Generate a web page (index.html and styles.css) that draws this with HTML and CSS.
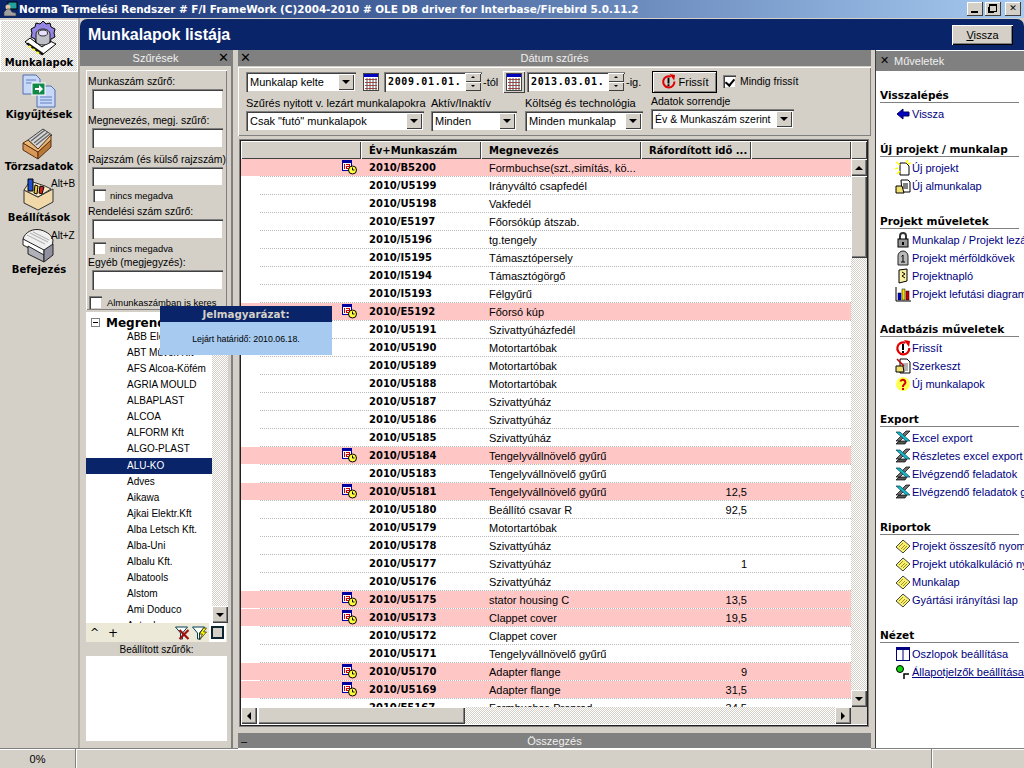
FILE: index.html
```html
<!DOCTYPE html>
<html lang="hu">
<head>
<meta charset="utf-8">
<title>Munkalapok listája</title>
<link rel="stylesheet" href="styles.css">
</head>
<body>
<svg class="defs" width="0" height="0">
  <symbol id="i-late" viewBox="0 0 16 16">
    <rect x="1" y="1" width="10" height="11" fill="#0000a0"/>
    <rect x="2" y="4" width="8" height="7" fill="#fff"/>
    <path d="M3 5h1v5H3zM5 5h4v3H6v1h3v1H5V7h3V6H5z" fill="#d00000"/>
    <circle cx="11.500" cy="11" r="4" fill="#ffff40" stroke="#000"/>
    <path d="M11.500 8.500V11h2" fill="none" stroke="#000"/>
  </symbol>
  <symbol id="i-cal" viewBox="0 0 16 18">
    <rect x="0.500" y="0.500" width="15" height="17" fill="#fff" stroke="#444"/>
    <rect x="1" y="1" width="14" height="3" fill="#0000c0"/>
    <path d="M2 6h12v1H2zM2 9h12v1H2zM2 12h12v1H2zM2 15h12v1H2z" fill="#c04040"/>
    <path d="M4 5v12M7 5v12M10 5v12M13 5v12" stroke="#555" fill="none"/>
  </symbol>
  <symbol id="i-refresh" viewBox="0 0 16 16">
    <path d="M10.500 2.800A6 6 0 1 0 14.300 8" fill="none" stroke="#e00000" stroke-width="2.200"/>
    <path d="M9 0l6 1-1 6z" fill="#e00000"/>
    <path d="M7 4h2v6H7zM7 11h2v2H7z" fill="#000"/>
  </symbol>
  <symbol id="i-xl" viewBox="0 0 16 16">
    <path d="M1 14h9l2-3H4z" fill="#555" stroke="#000" stroke-width=".7"/>
    <path d="M11 1h4L5 11H1z" fill="#707070" stroke="#000" stroke-width=".7"/>
    <path d="M1 2h4l10 9h-4z" fill="#18b8c8" stroke="#004050" stroke-width=".7"/>
  </symbol>
  <symbol id="i-rep" viewBox="0 0 16 16">
    <path d="M1 9l7-7 7 6-7 7z" fill="#f8f070" stroke="#444"/>
    <path d="M4 9l4-4M6 11l4-4M8 12l4-4" stroke="#a09020" fill="none"/>
  </symbol>
  <symbol id="i-funnel" viewBox="0 0 16 16">
    <path d="M1 2h12L8 8v6H6V8z" fill="#fff" stroke="#004050"/>
  </symbol>
</svg>

<div class="app">
  <header class="titlebar">
    <svg class="app-ico" viewBox="0 0 16 16"><rect x="5" y="1" width="9" height="7" fill="#20a0a0" stroke="#000"/><circle cx="5" cy="6" r="2.500" fill="#e0c0a0"/><path d="M1 15V11l3-3h3l2 3 4 1v3z" fill="#a0a0a0" stroke="#333" stroke-width=".6"/></svg>
    <span class="title-text">Norma Termelési Rendszer # F/I FrameWork (C)2004-2010 # OLE DB driver for Interbase/Firebird 5.0.11.2</span>
    <div class="winbtns">
      <span class="winbtn"><i class="w-min"></i></span>
      <span class="winbtn"><i class="w-max"></i></span>
      <span class="winbtn winbtn-close">✕</span>
    </div>
  </header>

  <div class="workspace">
    <nav class="nav">
      <a class="nav-item nav-active">
        <svg class="nav-ico" viewBox="0 0 40 36">
          <path d="M6 22l17 13 14-11-6-3-8 6-12-9z" fill="#fff" stroke="#000"/>
          <path d="M7 24l16 11 2-1.500-16-11z" fill="#111"/>
          <path d="M10 26l2 1.500M14 29l2 1.500M18 32l2 1.500" stroke="#ff0" stroke-width="2"/>
          <path d="M24 1l3 3 4-1 1 4 4 2-1 4 1 4-4 2-1 4-4-1-3 3-3-3-4 1-1-4-4-2 1-4-1-4 4-2 1-4 4 1z" fill="#9484e4" stroke="#000"/>
          <path d="M17 14a7 5 0 0 1 14 0v7a7 4 0 0 1-14 0z" fill="#c0c0c8" stroke="#222"/>
          <ellipse cx="24" cy="13" rx="4.500" ry="3" fill="#e8e0ff" stroke="#333"/>
        </svg>
        <span>Munkalapok</span>
      </a>
      <a class="nav-item">
        <svg class="nav-ico" viewBox="0 0 40 36">
          <path d="M4 3h13l4 4v15H4z" fill="#c8d8f8" stroke="#5070b0"/>
          <path d="M18 14h14l4 4v17H18z" fill="#c8d8f8" stroke="#5070b0"/>
          <path d="M7 8h10M7 11h6M21 25h12M21 28h12M21 31h12" stroke="#6080c0"/>
          <rect x="13" y="11" width="13" height="12" fill="#108848" stroke="#fff"/>
          <path d="M16 16h4v-3l4 4-4 4v-3h-4z" fill="#fff"/>
        </svg>
        <span>Kigyűjtések</span>
      </a>
      <a class="nav-item nav-short">
        <svg class="nav-ico" viewBox="0 0 40 36">
          <path d="M9 16L24 5l9 6-14 14z" fill="#d8d8d8" stroke="#444"/>
          <path d="M12 17L26 6M15 19L29 8M17 21L31 10" stroke="#666" stroke-width="1.500"/>
          <path d="M4 19l15 9v7L4 26z" fill="#d89858" stroke="#5a3010"/>
          <path d="M19 28l13-12v7L19 35z" fill="#b87838" stroke="#5a3010"/>
          <path d="M4 19l5-3 10 9 13-14v5L19 28z" fill="#e8b878" stroke="#5a3010"/>
        </svg>
        <span>Törzsadatok</span>
      </a>
      <a class="nav-item">
        <svg class="nav-ico" viewBox="0 0 40 36">
          <path d="M5 15l14 7 15-8v13l-15 8-14-7z" fill="#f0d8a8" stroke="#333"/>
          <path d="M11 6l15 5 6 3-13 8-14-7z" fill="#f8e8c0" stroke="#333"/>
          <path d="M9 4h5v12H9z" fill="#2050d0" stroke="#000"/>
          <path d="M16 10l3 1-1 8-3-1z" fill="#f0d020" stroke="#000"/>
          <path d="M21 11l4 1-2 7-3-1z" fill="#d02020" stroke="#000"/>
        </svg>
        <span>Beállítások</span>
        <small class="hotkey">Alt+B</small>
      </a>
      <a class="nav-item">
        <svg class="nav-ico" viewBox="0 0 40 36">
          <path d="M4 12C6 5 14 1 22 3c7 2 11 6 12 10l-1 9-8 4z" fill="#f0f0f0" stroke="#222"/>
          <path d="M8 8l18 9M11 6l18 9M14 5l16 8" stroke="#aaa"/>
          <path d="M4 12l21 11v6L4 18z" fill="#fff" stroke="#222"/>
          <path d="M9 19l16 9v7l-16-8z" fill="#b0b0b8" stroke="#222"/>
          <path d="M25 23l9-6v11l-9 7z" fill="#9090a0" stroke="#222"/>
        </svg>
        <span>Befejezés</span>
        <small class="hotkey">Alt+Z</small>
      </a>
    </nav>

    <div class="content">
      <div class="pagehead">
        <h1>Munkalapok listája</h1>
        <button class="btn btn-back"><u>V</u>issza</button>
      </div>

      <div class="panels">
        <aside class="left">
          <div class="phead"><span>Szűrések</span><b class="px">✕</b></div>
          <div class="filters">
            <label class="flabel first">Munkaszám szűrő:</label>
            <div class="inp"></div>
            <label class="flabel">Megnevezés, megj. szűrő:</label>
            <div class="inp"></div>
            <label class="flabel">Rajzszám (és külső rajzszám)</label>
            <div class="inp inp-s"></div>
            <div class="chk"><i class="box"></i>nincs megadva</div>
            <label class="flabel fl-a">Rendelési szám szűrő:</label>
            <div class="inp"></div>
            <div class="chk"><i class="box"></i>nincs megadva</div>
            <label class="flabel fl-b">Egyéb (megjegyzés):</label>
            <div class="inp"></div>
            <div class="chk chk-wide"><i class="box"></i>Almunkaszámban is keres</div>
          </div>
          <div class="treewrap">
            <div class="tree">
              <div class="troot"><i class="expander"></i>Megrendelők</div>
              <div class="tnode">ABB Elektro</div>
              <div class="tnode">ABT Művek Kft</div>
              <div class="tnode">AFS Alcoa-Köfém</div>
              <div class="tnode">AGRIA MOULD</div>
              <div class="tnode">ALBAPLAST</div>
              <div class="tnode">ALCOA</div>
              <div class="tnode">ALFORM Kft</div>
              <div class="tnode">ALGO-PLAST</div>
              <div class="tnode tsel">ALU-KO</div>
              <div class="tnode">Adves</div>
              <div class="tnode">Aikawa</div>
              <div class="tnode">Ajkai Elektr.Kft</div>
              <div class="tnode">Alba Letsch Kft.</div>
              <div class="tnode">Alba-Uni</div>
              <div class="tnode">Albalu Kft.</div>
              <div class="tnode">Albatools</div>
              <div class="tnode">Alstom</div>
              <div class="tnode">Ami Doduco</div>
              <div class="tnode">Antenk</div>
            </div>
            <div class="vs vs-left">
              <div class="vthumb vthumb-left"></div>
              <div class="track"></div>
              <div class="sbtn"><i class="ar ar-d"></i></div>
            </div>
          </div>
          <div class="ltools">
            <span class="lt-sym">^</span><span class="lt-sym lt-plus">+</span>
            <svg class="lt-ico lt-first" viewBox="0 0 16 16"><use href="#i-funnel"/><path d="M5 5l9 9M14 5l-9 9" stroke="#a01010" stroke-width="2.200"/></svg>
            <svg class="lt-ico" viewBox="0 0 16 16"><use href="#i-funnel"/><path d="M12 3L8 9h3l-3 6 7-8h-3l3-4z" fill="#ff0" stroke="#000" stroke-width=".6"/></svg>
            <span class="lt-frame"><i></i></span>
          </div>
          <div class="lset">Beállított szűrők:</div>
          <div class="lwhite"></div>
        </aside>

        <main class="center">
          <div class="phead phead-center"><b class="px px-left">✕</b><span>Dátum szűrés</span></div>
          <div class="datefilter">
            <div class="dfrow">
              <div class="sel w110 s-a"><span>Munkalap kelte</span><i class="sel-btn"><i class="ar ar-d"></i></i></div>
              <svg class="cal" viewBox="0 0 16 18"><use href="#i-cal"/></svg>
              <div class="date"><span>2009.01.01.</span><div class="spin"><i><i class="ar ar-us"></i></i><i><i class="ar ar-ds"></i></i></div></div>
              <span class="dlab">-tól</span>
              <span class="calbtn"><svg viewBox="0 0 16 18"><use href="#i-cal"/></svg></span>
              <div class="date date2"><span>2013.03.01.</span><div class="spin"><i><i class="ar ar-us"></i></i><i><i class="ar ar-ds"></i></i></div></div>
              <span class="dlab dlab2">-ig.</span>
              <button class="btn btn-refresh"><svg viewBox="0 0 16 16"><use href="#i-refresh"/></svg>Frissít</button>
              <div class="chk chk-always"><i class="box box-on"></i>Mindig frissít</div>
            </div>
            <div class="dfrow2">
              <div class="fcol fc1"><label>Szűrés nyitott v. lezárt munkalapokra</label><div class="sel"><span>Csak "futó" munkalapok</span><i class="sel-btn"><i class="ar ar-d"></i></i></div></div>
              <div class="fcol fc2"><label>Aktív/Inaktív</label><div class="sel"><span>Minden</span><i class="sel-btn"><i class="ar ar-d"></i></i></div></div>
              <div class="fcol fc3"><label>Költség és technológia</label><div class="sel"><span>Minden munkalap</span><i class="sel-btn"><i class="ar ar-d"></i></i></div></div>
              <div class="fcol fc4"><label>Adatok sorrendje</label><div class="sel"><span>Év &amp; Munkaszám szerint</span><i class="sel-btn"><i class="ar ar-d"></i></i></div></div>
            </div>
          </div>

          <div class="grid">
            <div class="ghead">
              <div class="gh c1"></div>
              <div class="gh c2">Év+Munkaszám</div>
              <div class="gh c3">Megnevezés</div>
              <div class="gh c4">Ráfordított idő ...</div>
              <div class="gh c5"></div>
              <div class="gh c6"></div>
            </div>
            <div class="gbody">
              <div class="rows">
                <div class="row late"><div class="c1 ic"><svg><use href="#i-late"/></svg></div><div class="c2">2010/B5200</div><div class="c3">Formbuchse(szt.,simítás, kö...</div><div class="c4"></div></div>
                <div class="row"><div class="c1"></div><div class="c2">2010/U5199</div><div class="c3">Irányváltó csapfedél</div><div class="c4"></div></div>
                <div class="row"><div class="c1"></div><div class="c2">2010/U5198</div><div class="c3">Vakfedél</div><div class="c4"></div></div>
                <div class="row"><div class="c1"></div><div class="c2">2010/E5197</div><div class="c3">Főorsókúp átszab.</div><div class="c4"></div></div>
                <div class="row"><div class="c1"></div><div class="c2">2010/I5196</div><div class="c3">tg.tengely</div><div class="c4"></div></div>
                <div class="row"><div class="c1"></div><div class="c2">2010/I5195</div><div class="c3">Támasztópersely</div><div class="c4"></div></div>
                <div class="row"><div class="c1"></div><div class="c2">2010/I5194</div><div class="c3">Támasztógörgő</div><div class="c4"></div></div>
                <div class="row"><div class="c1"></div><div class="c2">2010/I5193</div><div class="c3">Félgyűrű</div><div class="c4"></div></div>
                <div class="row late"><div class="c1 ic"><svg><use href="#i-late"/></svg></div><div class="c2">2010/E5192</div><div class="c3">Főorsó kúp</div><div class="c4"></div></div>
                <div class="row"><div class="c1"></div><div class="c2">2010/U5191</div><div class="c3">Szivattyúházfedél</div><div class="c4"></div></div>
                <div class="row"><div class="c1"></div><div class="c2">2010/U5190</div><div class="c3">Motortartóbak</div><div class="c4"></div></div>
                <div class="row"><div class="c1"></div><div class="c2">2010/U5189</div><div class="c3">Motortartóbak</div><div class="c4"></div></div>
                <div class="row"><div class="c1"></div><div class="c2">2010/U5188</div><div class="c3">Motortartóbak</div><div class="c4"></div></div>
                <div class="row"><div class="c1"></div><div class="c2">2010/U5187</div><div class="c3">Szivattyúház</div><div class="c4"></div></div>
                <div class="row"><div class="c1"></div><div class="c2">2010/U5186</div><div class="c3">Szivattyúház</div><div class="c4"></div></div>
                <div class="row"><div class="c1"></div><div class="c2">2010/U5185</div><div class="c3">Szivattyúház</div><div class="c4"></div></div>
                <div class="row late"><div class="c1 ic"><svg><use href="#i-late"/></svg></div><div class="c2">2010/U5184</div><div class="c3">Tengelyvállnövelő gyűrű</div><div class="c4"></div></div>
                <div class="row"><div class="c1"></div><div class="c2">2010/U5183</div><div class="c3">Tengelyvállnövelő gyűrű</div><div class="c4"></div></div>
                <div class="row late"><div class="c1 ic"><svg><use href="#i-late"/></svg></div><div class="c2">2010/U5181</div><div class="c3">Tengelyvállnövelő gyűrű</div><div class="c4">12,5</div></div>
                <div class="row"><div class="c1"></div><div class="c2">2010/U5180</div><div class="c3">Beállító csavar R</div><div class="c4">92,5</div></div>
                <div class="row"><div class="c1"></div><div class="c2">2010/U5179</div><div class="c3">Motortartóbak</div><div class="c4"></div></div>
                <div class="row"><div class="c1"></div><div class="c2">2010/U5178</div><div class="c3">Szivattyúház</div><div class="c4"></div></div>
                <div class="row"><div class="c1"></div><div class="c2">2010/U5177</div><div class="c3">Szivattyúház</div><div class="c4">1</div></div>
                <div class="row"><div class="c1"></div><div class="c2">2010/U5176</div><div class="c3">Szivattyúház</div><div class="c4"></div></div>
                <div class="row late"><div class="c1 ic"><svg><use href="#i-late"/></svg></div><div class="c2">2010/U5175</div><div class="c3">stator housing C</div><div class="c4">13,5</div></div>
                <div class="row late"><div class="c1 ic"><svg><use href="#i-late"/></svg></div><div class="c2">2010/U5173</div><div class="c3">Clappet cover</div><div class="c4">19,5</div></div>
                <div class="row"><div class="c1"></div><div class="c2">2010/U5172</div><div class="c3">Clappet cover</div><div class="c4"></div></div>
                <div class="row"><div class="c1"></div><div class="c2">2010/U5171</div><div class="c3">Tengelyvállnövelő gyűrű</div><div class="c4"></div></div>
                <div class="row late"><div class="c1 ic"><svg><use href="#i-late"/></svg></div><div class="c2">2010/U5170</div><div class="c3">Adapter flange</div><div class="c4">9</div></div>
                <div class="row late"><div class="c1 ic"><svg><use href="#i-late"/></svg></div><div class="c2">2010/U5169</div><div class="c3">Adapter flange</div><div class="c4">31,5</div></div>
                <div class="row"><div class="c1"></div><div class="c2">2010/E5167</div><div class="c3">Formbuchse Preprod</div><div class="c4">34,5</div></div>
              </div>
              <div class="vs">
                <div class="sbtn"><i class="ar ar-u"></i></div>
                <div class="vthumb"></div>
                <div class="track"></div>
                <div class="sbtn"><i class="ar ar-d"></i></div>
              </div>
            </div>
            <div class="hs">
              <div class="sbtn"><i class="ar ar-l"></i></div>
              <div class="hthumb"></div>
              <div class="track"></div>
              <div class="sbtn"><i class="ar ar-r"></i></div>
              <div class="corner"></div>
            </div>
          </div>

          <div class="summary"><span class="sum-min">–</span><span>Összegzés</span></div>
        </main>

        <aside class="right">
          <div class="rhead"><b>✕</b>Műveletek</div>
          <div class="rbody">
            <section class="rsec rsec-first">
              <h3>Visszalépés</h3>
              <a class="act"><svg viewBox="0 0 16 16"><path d="M2 8l6-5v3h6v4H8v3z" fill="#0000c0" stroke="#000060"/></svg>Vissza</a>
            </section>
            <section class="rsec">
              <h3>Új projekt / munkalap</h3>
              <a class="act"><svg viewBox="0 0 16 16"><path d="M5 3h6l3 3v9H5z" fill="#fff" stroke="#000"/><path d="M1 2l4 3M0 9l3-1M2 14l3-3M13 0l-2 3M16 3l-3 1" stroke="#ff0" stroke-width="1.500"/></svg>Új projekt</a>
              <a class="act"><svg viewBox="0 0 16 16"><path d="M6 2h7l2 2v10H7z" fill="#fff" stroke="#000"/><path d="M8 6h5M8 8h5M8 10h5" stroke="#000"/><path d="M1 8h6l2 7H1z" fill="#f0e070" stroke="#000"/></svg>Új almunkalap</a>
            </section>
            <section class="rsec">
              <h3>Projekt műveletek</h3>
              <a class="act"><svg viewBox="0 0 16 16"><path d="M5 8V4a3 3 0 0 1 6 0v4" fill="none" stroke="#333" stroke-width="2"/><rect x="3" y="7" width="10" height="8" fill="#999" stroke="#000"/><rect x="7" y="10" width="2" height="3"/></svg>Munkalap / Projekt lezárás</a>
              <a class="act"><svg viewBox="0 0 16 16"><path d="M3 15V6a5 5 0 0 1 10 0v9z" fill="#b8b8b8" stroke="#222"/><path d="M8 5v7M6 12h4M6.500 6.500L8 5" stroke="#000" fill="none"/></svg>Projekt mérföldkövek</a>
              <a class="act"><svg viewBox="0 0 16 16"><path d="M4 2l8-1v12l-8 2z" fill="#f8f0a0" stroke="#000"/><path d="M7 4l3 2-3 2 3 2" stroke="#000" fill="none"/></svg>Projektnapló</a>
              <a class="act"><svg viewBox="0 0 16 16"><path d="M1 1v14h15" fill="none" stroke="#000"/><rect x="3" y="7" width="3" height="7" fill="#0000d0" stroke="#000" stroke-width=".5"/><rect x="7" y="3" width="3" height="11" fill="#f0e000" stroke="#000" stroke-width=".5"/><rect x="11" y="5" width="3" height="9" fill="#d00000" stroke="#000" stroke-width=".5"/></svg>Projekt lefutási diagram</a>
            </section>
            <section class="rsec">
              <h3>Adatbázis műveletek</h3>
              <a class="act"><svg viewBox="0 0 16 16"><use href="#i-refresh"/></svg>Frissít</a>
              <a class="act"><svg viewBox="0 0 16 16"><path d="M5 1h7l3 3v11H5z" fill="#fff" stroke="#000"/><path d="M7 6h6M7 8h6M7 10h6M7 12h6" stroke="#666"/><path d="M1 8h7l1 6H1z" fill="#f0e070" stroke="#000"/><path d="M2 1l7 7" stroke="#c00000" stroke-width="1.500"/></svg>Szerkeszt</a>
              <a class="act"><svg viewBox="0 0 16 16"><circle cx="8" cy="8" r="7" fill="#ffff50"/><path d="M5.500 5.500a2.500 2.500 0 1 1 3.500 3L8 10v1" fill="none" stroke="#d00000" stroke-width="2"/><rect x="7" y="12" width="2" height="2" fill="#d00000"/></svg>Új munkalapok</a>
            </section>
            <section class="rsec">
              <h3>Export</h3>
              <a class="act"><svg viewBox="0 0 16 16"><use href="#i-xl"/></svg>Excel export</a>
              <a class="act"><svg viewBox="0 0 16 16"><use href="#i-xl"/></svg>Részletes excel export</a>
              <a class="act"><svg viewBox="0 0 16 16"><use href="#i-xl"/></svg>Elvégzendő feladatok</a>
              <a class="act"><svg viewBox="0 0 16 16"><use href="#i-xl"/></svg>Elvégzendő feladatok gyártásba</a>
            </section>
            <section class="rsec">
              <h3>Riportok</h3>
              <a class="act"><svg viewBox="0 0 16 16"><use href="#i-rep"/></svg>Projekt összesítő nyomtatás</a>
              <a class="act"><svg viewBox="0 0 16 16"><use href="#i-rep"/></svg>Projekt utókalkuláció nyomtatás</a>
              <a class="act"><svg viewBox="0 0 16 16"><use href="#i-rep"/></svg>Munkalap</a>
              <a class="act"><svg viewBox="0 0 16 16"><use href="#i-rep"/></svg>Gyártási irányítási lap</a>
            </section>
            <section class="rsec">
              <h3>Nézet</h3>
              <a class="act"><svg viewBox="0 0 16 16"><rect x="1.500" y="1.500" width="13" height="13" fill="#fff" stroke="#000080"/><rect x="1" y="1" width="14" height="3" fill="#000080"/><path d="M8 2v12" stroke="#000080"/></svg>Oszlopok beállítása</a>
              <a class="act act-u"><svg viewBox="0 0 16 16"><circle cx="5" cy="5" r="3.500" fill="#10d010" stroke="#000"/><path d="M9 15V10h5" fill="none" stroke="#000" stroke-width="1.500"/></svg>Állapotjelzők beállítása</a>
            </section>
          </div>
        </aside>
      </div>
    </div>
  </div>

  <footer class="statusbar">
    <div class="st st-pct">0%</div>
    <div class="st st-main"></div>
    <div class="st st-end"></div>
  </footer>

  <div class="legend">
    <div class="legend-head">Jelmagyarázat:</div>
    <div class="legend-body">Lejárt határidő: 2010.06.18.</div>
  </div>
</div>
</body>
</html>
```
FILE: styles.css
```css
* { box-sizing: border-box; }
html, body { margin: 0; padding: 0; }
body { font: 11px/14px "Liberation Sans", Arial, sans-serif; color: #000; background: #d4d0c8; }
.defs { position: absolute; }
i { font-style: normal; display: block; }

.app { position: relative; width: 1024px; height: 768px; display: flex; flex-direction: column; overflow: hidden; background: #d4d0c8; }

/* title bar */
.titlebar { height: 18px; flex: none; display: flex; align-items: center; padding: 0 3px; color: #fff; background: linear-gradient(90deg, #0a246a 0, #a6caf0 100%); }
.app-ico { width: 16px; height: 16px; flex: none; }
.title-text { font: bold 10.4px/18px "DejaVu Sans", sans-serif; white-space: nowrap; }
.winbtns { margin-left: auto; display: flex; gap: 2px; }
.winbtn { width: 16px; height: 14px; background: #d4d0c8; color: #000; font: bold 9px/13px "DejaVu Sans", sans-serif; text-align: center; box-shadow: inset -1px -1px #404040, inset 1px 1px #fff; position: relative; }
.winbtn-close { margin-left: 2px; }
.w-min { position: absolute; left: 4px; bottom: 3px; width: 7px; height: 2px; background: #000; }
.w-max { position: absolute; left: 4px; top: 2px; width: 8px; height: 8px; border: 1px solid #000; border-top-width: 2px; background: #d4d0c8; box-shadow: -2px 2px 0 -1px #000; }

.workspace { flex: 1; display: flex; min-height: 0; }

/* nav */
.nav { width: 80px; flex: none; padding-top: 2px; border-right: 2px solid #b0aca4; }
.nav-item { position: relative; display: flex; flex-direction: column; align-items: center; height: 52px; font: bold 10px/14px "DejaVu Sans", sans-serif; }
.nav-short { height: 51px; }
.nav-ico { width: 40px; height: 36px; flex: none; }
.nav-active { background: repeating-conic-gradient(#d4d0c8 0 25%, #fff 0 50%) 0 0 / 2px 2px; box-shadow: inset 1px 1px #fff, inset -1px -1px #fff; }
.hotkey { position: absolute; left: 51px; top: 3px; font: 10px/12px "Liberation Sans", sans-serif; }

.content { flex: 1; min-width: 0; display: flex; flex-direction: column; }

/* page head */
.pagehead { height: 31px; flex: none; margin-top: 1px; display: flex; align-items: center; justify-content: space-between; padding: 0 11px 0 8px; background: #0a246a; border-radius: 7px 7px 0 0; }
.pagehead h1 { margin: 0; color: #fff; font: bold 16px/20px "Liberation Sans", sans-serif; }
.btn { font: 11px/14px "Liberation Sans", sans-serif; background: #d4d0c8; color: #000; border: 0; padding: 0; box-shadow: inset -1px -1px #404040, inset 1px 1px #fff, inset -2px -2px #808080; }
.btn-back { width: 61px; height: 20px; box-shadow: inset 1px 1px #fff, inset -1px -1px #000, inset -2px -2px #808080; }

.panels { flex: 1; min-height: 0; display: flex; }

/* left panel */
.left { width: 153px; flex: none; display: flex; flex-direction: column; border-right: 2px solid #808080; }
.phead { height: 16px; flex: none; display: flex; align-items: center; justify-content: center; position: relative; background: #808080; color: #f0f0f0; }
.px { position: absolute; right: 2px; top: 1px; color: #000; font: bold 13px/14px "DejaVu Sans", sans-serif; }
.px-left { right: auto; left: 2px; }
.filters { height: 240px; flex: none; margin: 4px 4px 0 6px; padding: 1px 4px 0 2px; box-shadow: inset 1px 1px #fff, inset -1px -1px #808080; font-size: 10.4px; }
.flabel { display: block; margin-top: 5px; white-space: nowrap; }
.first { margin-top: 4px; }
.fl-a { margin-top: 3px; }
.fl-b { margin-top: 1px; }
.inp { width: 131px; height: 20px; margin-left: 4px; background: #fff; box-shadow: inset 1px 1px #808080, inset 2px 2px #404040, inset -1px -1px #d4d0c8; }
.inp-s { height: 19px; }
.chk { display: flex; align-items: center; height: 13px; margin: 3px 0 0 5px; font-size: 9.4px; line-height: 13px; white-space: nowrap; }
.box { width: 13px; height: 13px; margin-right: 4px; flex: none; background: #fff; box-shadow: inset 1px 1px #808080, inset 2px 2px #404040, inset -1px -1px #d4d0c8; position: relative; }
.box-on::after { content: ""; position: absolute; left: 4px; top: 2px; width: 4px; height: 7px; border: solid #000; border-width: 0 2px 2px 0; transform: rotate(40deg); }
.chk-wide { margin: 6px 0 0 1px; }
.chk-wide .box { margin-right: 5px; }
.treewrap { height: 311px; flex: none; margin: 2px 4px 0 6px; display: flex; background: #fff; font-size: 10px; }
.tree { width: 126px; flex: none; overflow: hidden; padding-top: 4px; }
.troot { height: 13px; display: flex; align-items: center; font: bold 12px/14px "DejaVu Sans", sans-serif; white-space: nowrap; padding-left: 5px; }
.expander { width: 9px; height: 9px; margin-right: 6px; border: 1px solid #808080; background: linear-gradient(#000, #000) center / 5px 1px no-repeat; }
.tnode { height: 16px; padding-left: 41px; line-height: 16px; white-space: nowrap; }
.tsel { margin-top: 1px; background: #0a246a; color: #fff; }
.vs { width: 16px; flex: none; display: flex; flex-direction: column; }
.vs-left { height: 311px; }
.sbtn { flex: none; width: 16px; height: 17px; background: #d4d0c8; display: flex; align-items: center; justify-content: center; box-shadow: inset 1px 1px #fff, inset -1px -1px #404040, inset -2px -2px #808080; }
.track { flex: 1; background: repeating-conic-gradient(#d4d0c8 0 25%, #fff 0 50%) 0 0 / 2px 2px; }
.vthumb { height: 82px; flex: none; background: #d4d0c8; box-shadow: inset 1px 1px #fff, inset -1px -1px #404040, inset -2px -2px #808080; }
.vthumb-left { height: 40px; }
.ar { width: 0; height: 0; border: 4px solid transparent; }
.ar-d { border-top-color: #000; border-bottom-width: 0; }
.ar-u { border-bottom-color: #000; border-top-width: 0; }
.ar-l { border-right-color: #000; border-left-width: 0; }
.ar-r { border-left-color: #000; border-right-width: 0; }
.ltools { height: 19px; flex: none; margin: 0 4px 0 6px; display: flex; align-items: center; background: #ece9d8; padding-left: 4px; }
.lt-sym { font: 11px/14px "DejaVu Sans", sans-serif; width: 18px; }
.lt-plus { font-size: 12px; }
.lt-ico { width: 17px; height: 16px; }
.lt-first { margin-left: 48px; }
.lt-frame { width: 17px; height: 19px; margin-left: 1px; background: #fff; display: flex; align-items: center; justify-content: center; }
.lt-frame i { width: 13px; height: 13px; border: 2px solid #0b2630; background: #d4d0c8; }
.lset { height: 14px; flex: none; margin: 0 4px 0 6px; text-align: center; font-size: 10px; line-height: 16px; }
.lwhite { height: 85px; flex: none; margin: 0 4px 0 6px; background: #fff; }

/* center */
.center { width: 640px; flex: none; display: flex; flex-direction: column; padding: 0 5px 0 4px; }
.phead-center { margin: 0 -3px 0 1px; }
.datefilter { height: 69px; flex: none; margin: 1px -3px 0 1px; padding: 3px 0 0 8px; box-shadow: inset 1px 1px #fff, inset -1px -1px #808080; }
.dfrow { display: flex; align-items: center; height: 23px; }
.sel { display: flex; align-items: center; justify-content: space-between; height: 20px; padding: 0 2px 0 4px; background: #fff; box-shadow: inset 1px 1px #808080, inset 2px 2px #404040, inset -1px -1px #d4d0c8; white-space: nowrap; }
.w110 { width: 110px; }
.sel-btn { width: 16px; height: 16px; flex: none; display: flex; align-items: center; justify-content: center; background: #d4d0c8; box-shadow: inset 1px 1px #fff, inset -1px -1px #404040; }
.cal { width: 16px; height: 18px; margin-left: 7px; flex: none; }
.date { width: 98px; height: 20px; margin-left: 5px; flex: none; display: flex; align-items: center; justify-content: space-between; padding-left: 4px; background: #fff; box-shadow: inset 1px 1px #808080, inset 2px 2px #404040, inset -1px -1px #d4d0c8; font: bold 10px/14px "DejaVu Sans Mono", monospace; letter-spacing: .65px; }
.spin { width: 16px; height: 18px; flex: none; margin-right: 1px; display: flex; flex-direction: column; }
.spin > i { flex: 1; display: flex; align-items: center; justify-content: center; background: #d4d0c8; box-shadow: inset 1px 1px #fff, inset -1px -1px #404040; }
.ar-us { border: 2px solid transparent; border-bottom-color: #000; border-top-width: 0; }
.ar-ds { border: 2px solid transparent; border-top-color: #000; border-bottom-width: 0; }
.dlab { margin-left: 1px; width: 17px; flex: none; white-space: nowrap; }
.calbtn { width: 22px; height: 22px; margin-left: 3px; flex: none; display: flex; align-items: center; justify-content: center; background: #d4d0c8; box-shadow: inset 1px 1px #fff, inset -1px -1px #404040; }
.calbtn svg { width: 16px; height: 18px; }
.date2 { margin-left: 2px; }
.dlab2 { width: 15px; }
.btn-refresh { width: 65px; height: 22px; margin-left: 11px; flex: none; display: flex; align-items: center; justify-content: center; gap: 3px; box-shadow: 0 0 0 1px #000 inset, inset 2px 2px #fff, inset -2px -2px #808080; }
.btn-refresh svg { width: 15px; height: 15px; }
.chk-always { margin: 0 0 0 6px; font-size: 10.4px; }
.dfrow2 { display: flex; margin-top: 2px; }
.fcol { display: flex; flex-direction: column; flex: none; }
.fcol label { white-space: nowrap; line-height: 16px; }
.fc1 { width: 178px; margin-right: 7px; }
.fc2 { width: 86px; margin-right: 8px; }
.fc3 { width: 118px; margin-right: 8px; }
.fc4 { width: 143px; margin-top: -2px; font-size: 10.500px; }
.grid { height: 586px; flex: none; margin: 4px 0 0 3px; width: 628px; border: 1px solid #202020; box-shadow: 0 0 0 1px #808080; display: flex; flex-direction: column; background: #fff; }
.ghead { height: 18px; flex: none; display: flex; font: bold 10px/19px "DejaVu Sans", sans-serif; }
.gh { height: 18px; padding-left: 8px; background: #d4d0c8; box-shadow: inset 1px 1px #fff, inset -1px -1px #404040; white-space: nowrap; overflow: hidden; }
.c1 { width: 120px; flex: none; }
.c2 { width: 120px; flex: none; }
.c3 { width: 160px; flex: none; }
.c4 { width: 110px; flex: none; }
.c5 { width: 100px; flex: none; }
.c6 { width: 16px; flex: none; }
.gbody { height: 548px; flex: none; display: flex; }
.rows { width: 610px; flex: none; overflow: hidden; }
.row { display: flex; height: 18px; line-height: 18px; background-image: repeating-linear-gradient(90deg, #b8b8b8 0 1px, transparent 1px 2px); background-repeat: no-repeat; background-position: right bottom; background-size: 591px 1px; }
.late { background-image: repeating-linear-gradient(90deg, #b8b8b8 0 1px, transparent 1px 2px), linear-gradient(#ffc6c6, #ffc6c6); background-position: right bottom, left top; background-size: 591px 1px, 100% 17px; }
.row .c2 { padding-left: 8px; font: bold 10px/18px "DejaVu Sans", sans-serif; }
.row .c3 { padding-left: 8px; white-space: nowrap; overflow: hidden; }
.row .c4 { padding-right: 4px; text-align: right; }
.ic { display: flex; justify-content: flex-end; padding: 0 4px 0 0; }
.ic svg { width: 16px; height: 16px; display: block; }
.hs { height: 17px; flex: none; display: flex; }
.hs .sbtn { height: 17px; }
.hthumb { width: 207px; flex: none; background: #d4d0c8; box-shadow: inset 1px 1px #fff, inset -1px -1px #404040, inset -2px -2px #808080; margin-left: 1px; }
.corner { width: 16px; flex: none; background: #d4d0c8; }
.summary { height: 16px; flex: none; margin: 7px -3px 0 1px; position: relative; display: flex; align-items: center; justify-content: center; background: #808080; color: #f0f0f0; box-shadow: inset 0 -1px #fff; }
.sum-min { position: absolute; left: 3px; top: 1px; color: #000; }

/* right */
.right { flex: 1; min-width: 0; display: flex; flex-direction: column; background: #fff; border-left: 1px solid #404040; margin-left: 2px; overflow: hidden; }
.rhead { height: 20px; flex: none; margin-top: 1px; padding-left: 4px; display: flex; align-items: center; background: #808080; color: #f0f0f0; }
.rhead b { color: #000; font: 11px/14px "DejaVu Sans", sans-serif; width: 14px; }
.rbody { flex: 1; padding-left: 4px; overflow: hidden; }
.rsec { margin-top: 19px; }
.rsec-first { margin-top: 17px; }
.rsec h3 { margin: 0 5px 2px 0; height: 15px; border-bottom: 1px solid #808080; font: bold 10.500px/14px "DejaVu Sans", sans-serif; white-space: nowrap; }
.act { display: flex; align-items: center; height: 18px; width: 200px; padding-left: 15px; color: #000080; white-space: nowrap; }
.act svg { width: 16px; height: 16px; flex: none; margin-right: 1px; }
.act-u { text-decoration: underline; }

/* status */
.statusbar { height: 20px; flex: none; display: flex; border-top: 1px solid #808080; box-shadow: inset 0 1px #fff; }
.st { height: 100%; text-align: center; line-height: 20px; border-right: 1px solid #808080; box-shadow: 1px 0 #fff; }
.st-pct { width: 76px; }
.st-main { flex: 1; margin-left: 1px; }
.st-end { width: 92px; border-right: 0; box-shadow: none; }

/* floating legend */
.legend { position: absolute; left: 160px; top: 306px; width: 172px; height: 49px; background: #a6caf0; text-align: center; }
.legend-head { height: 16px; background: #0a246a; color: #d4d0c8; font: bold 10.300px/16px "DejaVu Sans", sans-serif; }
.legend-body { padding-top: 10px; font-size: 8.800px; line-height: 14px; }
```
